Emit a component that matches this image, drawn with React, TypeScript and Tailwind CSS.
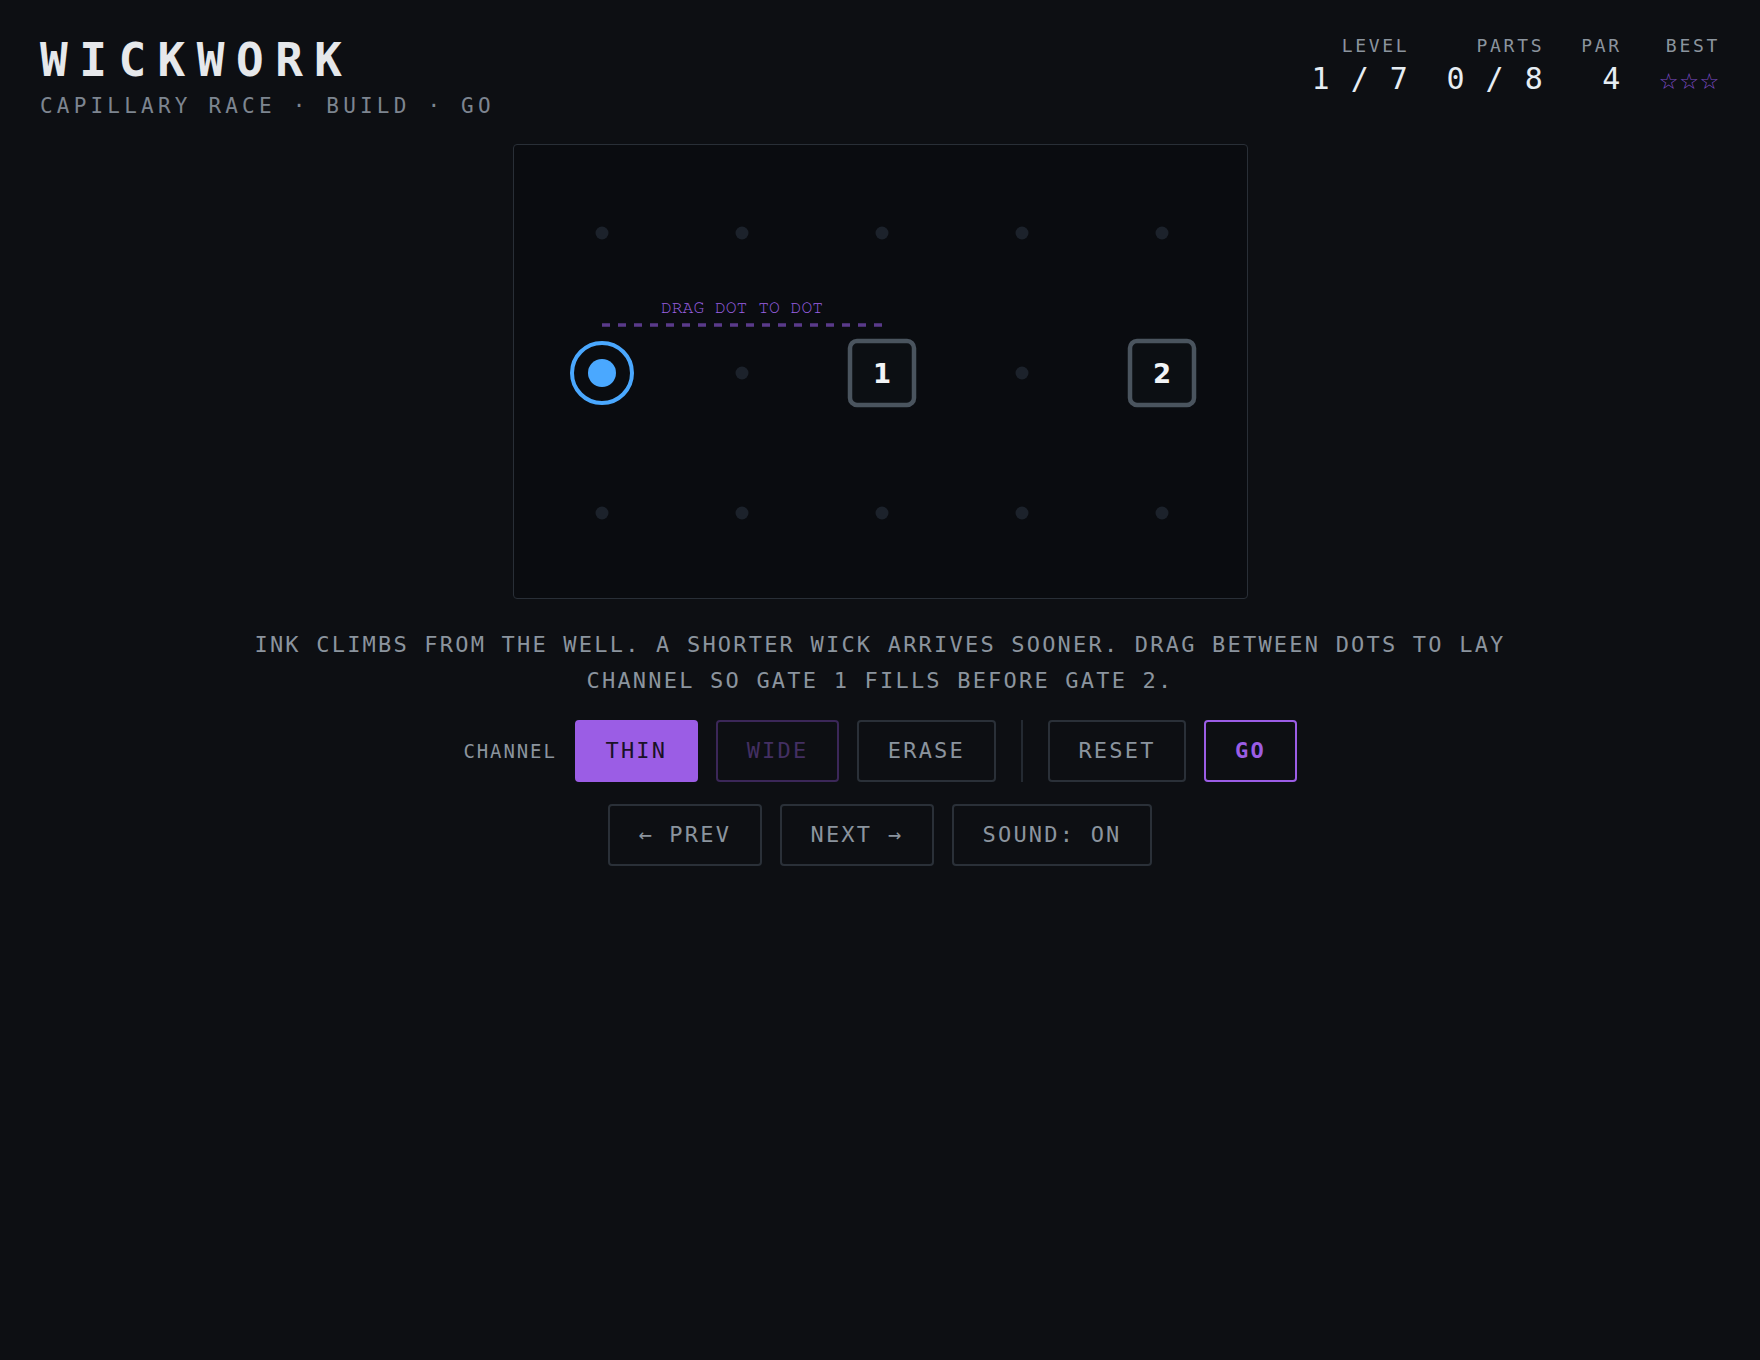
import React from 'react'

// Board layout: 5 x 3 grid of dots, 140px apart, inset 88px inside the frame
const COLS = [0, 1, 2, 3, 4]
const ROWS = [0, 1, 2]
const STEP = 140
const INSET = 88

const px = (c: number) => INSET + c * STEP
const py = (r: number) => INSET + r * STEP

interface StatProps {
  label: string
  value: React.ReactNode
}

function Stat({ label, value }: StatProps) {
  return (
    <div className="flex flex-col items-end">
      <div className="text-[18px] leading-none tracking-[0.15em] text-[#8b949e]">{label}</div>
      <div className="mt-[9px] h-[30px] flex items-center text-[30px] leading-none tracking-[0.05em] text-[#e6edf3]">
        {value}
      </div>
    </div>
  )
}

function Board() {
  // Which grid cells hold something other than a plain dot
  const isSpecial = (c: number, r: number) => r === 1 && (c === 0 || c === 2 || c === 4)

  return (
    <div className="w-[735px] h-[455px] border-[1.5px] border-[#292f37] rounded-[4px] bg-[#0a0c10]">
      <svg width="732" height="452" viewBox="0 0 732 452" className="block">
        {/* grid dots */}
        {ROWS.map((r) =>
          COLS.map((c) =>
            isSpecial(c, r) ? null : <circle key={`${c}-${r}`} cx={px(c)} cy={py(r)} r="6.5" fill="#1c222b" />
          )
        )}

        {/* hint */}
        <text
          x={px(1)}
          y={168}
          textAnchor="middle"
          fontSize="18"
          fill="#9d62e6"
          fontFamily="'Nimbus Mono PS', 'Nimbus Mono L', FreeMono, 'Courier 10 Pitch', Courier, 'Liberation Mono', monospace"
        >
          DRAG DOT TO DOT
        </text>
        <line
          x1={px(0)}
          y1={180}
          x2={px(2)}
          y2={180}
          stroke="#5a3a8a"
          strokeWidth="3.5"
          strokeDasharray="8 8"
        />

        {/* well */}
        <circle cx={px(0)} cy={py(1)} r="30" fill="none" stroke="#4aa8ff" strokeWidth="4" />
        <circle cx={px(0)} cy={py(1)} r="14" fill="#4aa8ff" />

        {/* gates */}
        {[
          { c: 2, n: '1' },
          { c: 4, n: '2' },
        ].map((g) => (
          <g key={g.n}>
            <rect
              x={px(g.c) - 32}
              y={py(1) - 32}
              width="64"
              height="64"
              rx="7"
              fill="#0c0f13"
              stroke="#4a545e"
              strokeWidth="4.5"
            />
            <text
              x={px(g.c)}
              y={py(1) + 9.5}
              textAnchor="middle"
              fontSize="26"
              fontWeight="bold"
              fill="#f2f4f6"
              fontFamily="'DejaVu Sans', sans-serif"
            >
              {g.n}
            </text>
          </g>
        ))}
      </svg>
    </div>
  )
}

const btnBase = 'h-[62px] px-[28.7px] border-2 rounded-[4px] text-[22px] leading-none tracking-[0.1em]'
const btnQuiet = `${btnBase} border-[#2a3038] text-[#8b949e]`

export default function App() {
  return (
    <div className="min-h-screen bg-[#0d0f13] font-['DejaVu_Sans_Mono',monospace]">
      {/* Header */}
      <header className="flex justify-between items-start px-10 pt-[37px]">
        <div>
          <h1 className="text-[46px] leading-none font-bold tracking-[0.25em] text-[#e6e8eb]">WICKWORK</h1>
          <p className="mt-[13px] text-[21px] leading-none tracking-[0.2em] text-[#7d8590]">
            CAPILLARY RACE · BUILD · GO
          </p>
        </div>
        <div className="flex gap-[37px]">
          <Stat label="LEVEL" value="1 / 7" />
          <Stat label="PARTS" value="0 / 8" />
          <Stat label="PAR" value="4" />
          <Stat
            label="BEST"
            value={
              <span className="pt-[5px] text-[22px] tracking-[0.03em] text-[#7d4cc6] font-['DejaVu_Sans',sans-serif]">
                ☆☆☆
              </span>
            }
          />
        </div>
      </header>

      {/* Play area */}
      <main className="flex flex-col items-center mt-[27px]">
        <Board />

        <p className="mt-[28px] max-w-[1290px] text-center text-[22px] leading-[36px] tracking-[0.1em] text-[#8b949e]">
          INK CLIMBS FROM THE WELL. A SHORTER WICK ARRIVES SOONER. DRAG BETWEEN DOTS TO LAY CHANNEL SO GATE 1
          FILLS BEFORE GATE 2.
        </p>

        {/* Tools */}
        <div className="mt-[21px] flex items-center gap-[18px]">
          <span className="text-[19px] tracking-[0.1em] text-[#8b949e]">CHANNEL</span>
          <button className={`${btnBase} bg-[#9b5de5] border-[#9b5de5] text-[#1a1226]`}>THIN</button>
          <button className={`${btnBase} border-[#3b2758] text-[#432f62]`}>WIDE</button>
          <button className={btnQuiet}>ERASE</button>
          <div className="w-[2px] h-[62px] mx-[7px] bg-[#242a32]" />
          <button className={btnQuiet}>RESET</button>
          <button className={`${btnBase} border-[#9b5de5] text-[#9b5de5] font-bold`}>GO</button>
        </div>

        {/* Navigation */}
        <div className="mt-[22px] flex items-center gap-[18px]">
          <button className={btnQuiet}>← PREV</button>
          <button className={btnQuiet}>NEXT →</button>
          <button className={btnQuiet}>SOUND: ON</button>
        </div>
      </main>
    </div>
  )
}
